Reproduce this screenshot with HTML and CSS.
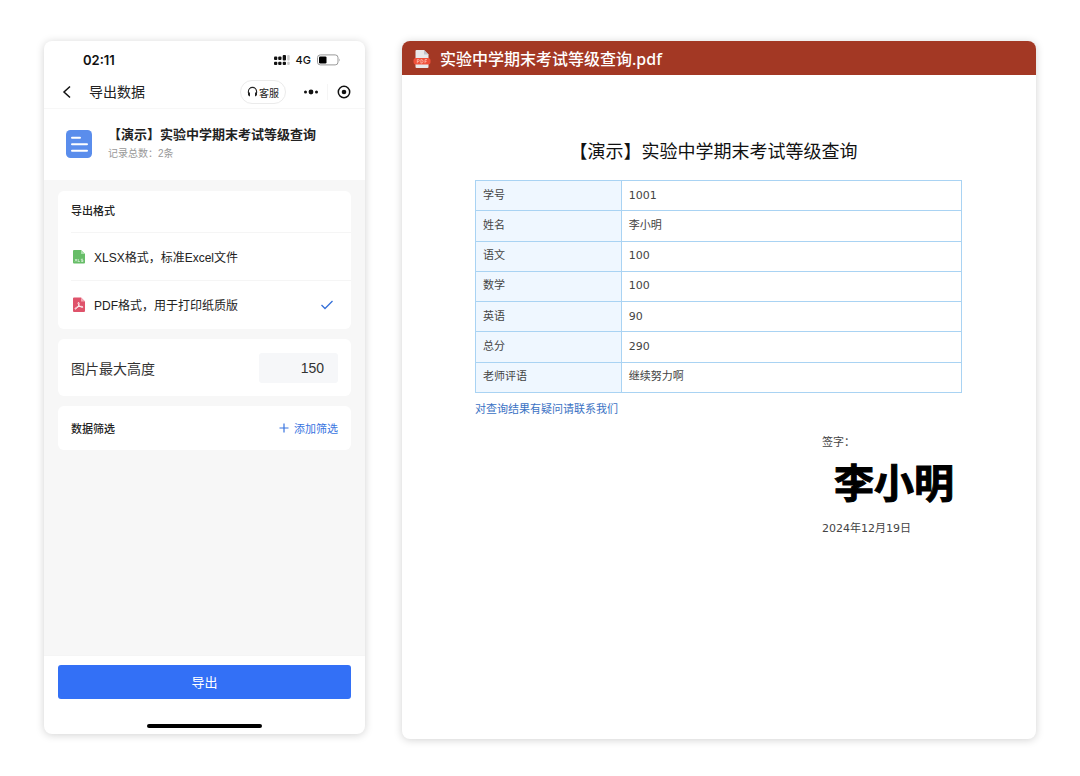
FILE: index.html
```html
<!DOCTYPE html>
<html lang="zh-CN">
<head>
<meta charset="utf-8">
<meta name="viewport" content="width=device-width, initial-scale=1">
<title>导出数据</title>
<link rel="stylesheet" href="styles.css">
</head>
<body>
<main class="page">
  <section class="phone">
    <div class="status">
      <span class="clock">02:11</span>
      <span class="status-right">
        <svg width="16" height="12" viewBox="0 0 16 12" aria-hidden="true">
          <g fill="#111"><rect x="0" y="2.500" width="3.300" height="3.500" rx="1"/><rect x="4.200" y="2.500" width="3.300" height="3.500" rx="1"/><rect x="8.700" y="1" width="3.300" height="5.500" rx="1"/><rect x="0" y="7.700" width="3.300" height="3.300" rx="1"/><rect x="4.200" y="7.700" width="3.300" height="3.300" rx="1"/><rect x="8.700" y="7.700" width="3.300" height="3.300" rx="1"/></g>
          <g fill="#ccc"><rect x="13.200" y="1" width="2.500" height="5.500" rx="1"/><rect x="13.200" y="7.700" width="2.500" height="3.300" rx="1"/></g>
        </svg>
        <span class="net">4G</span>
        <svg width="24" height="12" viewBox="0 0 24 12" aria-hidden="true">
          <rect x=".5" y=".9" width="20.500" height="10" rx="2.800" fill="#fff" stroke="#999"/>
          <rect x="2" y="2.400" width="7.500" height="7" rx="1.200" fill="#000"/>
          <path d="M22.300 4.500q1.500 1.400 0 3z" fill="#999"/>
        </svg>
      </span>
    </div>
    <header class="nav">
      <button class="icon-btn back" aria-label="返回"><svg width="10" height="14" viewBox="0 0 10 14"><path d="M8 1.500 2 7l6 5.500" fill="none" stroke="#111" stroke-width="1.500"/></svg></button>
      <h1 class="nav-title">导出数据</h1>
      <button class="service"><svg width="11" height="12" viewBox="0 0 11 12" aria-hidden="true"><path d="M1.400 7V5.500a4.100 4.100 0 0 1 8.200 0V7" fill="none" stroke="#222" stroke-width="1.100"/><path d="M1 6.500h2v3.700H2.200L1 9zM10 6.500H8v3.700h.8L10 9z" fill="#222"/></svg>客服</button>
      <div class="capsule">
        <button class="icon-btn" aria-label="更多"><svg width="16" height="16" viewBox="0 0 16 16"><g fill="#111"><circle cx="2.500" cy="8" r="1.500"/><circle cx="8" cy="8" r="2.400"/><circle cx="13.500" cy="8" r="1.500"/></g></svg></button>
        <button class="icon-btn close" aria-label="关闭"><svg width="14" height="14" viewBox="0 0 14 14"><circle cx="7" cy="7" r="5.700" fill="none" stroke="#111" stroke-width="1.500"/><circle cx="7" cy="7" r="2.300" fill="#111"/></svg></button>
      </div>
    </header>
    <div class="intro">
      <svg class="intro-icon" width="26" height="28" viewBox="0 0 26 28" aria-hidden="true"><rect width="26" height="28" rx="4.500" fill="#5a8dec"/><path d="M6 7.700h8M6 14.300h15M6 20.700h15" stroke="#fff" stroke-width="2" stroke-linecap="round"/></svg>
      <div>
        <h2 class="intro-title">【演示】实验中学期末考试等级查询</h2>
        <p class="intro-count">记录总数：2条</p>
      </div>
    </div>
    <div class="content">
      <fieldset class="card formats">
        <legend class="card-title">导出格式</legend>
        <label class="option">
          <svg width="14" height="16" viewBox="0 0 14 16" aria-hidden="true"><path d="M2 1h7l4 4v8.500a1 1 0 0 1-1 1H2a1 1 0 0 1-1-1V2a1 1 0 0 1 1-1z" fill="#67bd68"/><path d="M9 1v4h4z" fill="#a9dfaa"/><path d="m3 10 2 2.500m0-2.500-2 2.500M6.200 10v2.500h1.600M11 10.200H9.300v1.100H11v1.200H9.200" fill="none" stroke="#e8f7e8" stroke-width=".7"/></svg>
          <span>XLSX格式，标准Excel文件</span>
          <input class="radio" type="radio" name="format">
          <svg class="check" width="14" height="12" viewBox="0 0 14 12" aria-hidden="true"><path d="m1.500 6 3.500 3.500L12.500 2" fill="none" stroke="#3570d8" stroke-width="1.300"/></svg>
        </label>
        <label class="option">
          <svg width="14" height="16" viewBox="0 0 14 16" aria-hidden="true"><path d="M2 .5h7l4 4V14a1 1 0 0 1-1 1H2a1 1 0 0 1-1-1V1.500a1 1 0 0 1 1-1z" fill="#df536b"/><path d="M9 .5v4h4z" fill="#f3a6b3"/><path d="M6.500 5.500c1.300 0 .5 2.600-.4 4-.9 1.500-2.400 3-3.100 2.500-.6-.7 1.900-2.200 4-2.500 2-.3 4-.2 3.900.6-.3 1-3-.4-3.900-1.700C6 7 5.700 5.500 6.500 5.500z" fill="none" stroke="#fff" stroke-width=".9"/></svg>
          <span>PDF格式，用于打印纸质版</span>
          <input class="radio" type="radio" name="format" checked>
          <svg class="check" width="14" height="12" viewBox="0 0 14 12" aria-hidden="true"><path d="m1.500 6 3.500 3.500L12.500 2" fill="none" stroke="#3570d8" stroke-width="1.300"/></svg>
        </label>
      </fieldset>
      <div class="card height-card">
        <label for="max-height">图片最大高度</label>
        <input class="number" id="max-height" type="text" inputmode="numeric" value="150">
      </div>
      <div class="card filter-card">
        <h3 class="filter-title">数据筛选</h3>
        <button class="add"><svg width="10" height="10" viewBox="0 0 10 10" aria-hidden="true"><path d="M5 .5v9M.5 5h9" stroke="#3874df" stroke-width="1.200"/></svg>添加筛选</button>
      </div>
    </div>
    <footer class="footer">
      <button class="export">导出</button>
      <div class="home-bar"></div>
    </footer>
  </section>

  <article class="pdf">
    <header class="pdf-bar">
      <svg width="18" height="20" viewBox="0 0 18 20" aria-hidden="true"><path d="M3.500 1H11l4.500 4.500V18a1 1 0 0 1-1 1h-11a1 1 0 0 1-1-1V2a1 1 0 0 1 1-1z" fill="#e9e8ea"/><path d="M11 1v4.500h4.500z" fill="#bfc4cb"/><rect x=".5" y="9" width="17" height="6.500" rx="2.500" fill="#f0503a"/><path d="M4.300 14.200v-3.700h1q1 0 1 1t-1 1h-1M7.900 14.200v-3.700q2.200 0 2.200 1.850T7.900 14.200zM12 14.200v-3.700h2M12 12.300h1.700" fill="none" stroke="#ffc9bd" stroke-width=".7"/></svg>
      <span>实验中学期末考试等级查询.pdf</span>
    </header>
    <div class="sheet">
      <h2 class="sheet-title">【演示】实验中学期末考试等级查询</h2>
      <table class="grades">
        <tbody>
          <tr><th scope="row">学号</th><td>1001</td></tr>
          <tr><th scope="row">姓名</th><td>李小明</td></tr>
          <tr><th scope="row">语文</th><td>100</td></tr>
          <tr><th scope="row">数学</th><td>100</td></tr>
          <tr><th scope="row">英语</th><td>90</td></tr>
          <tr><th scope="row">总分</th><td>290</td></tr>
          <tr><th scope="row">老师评语</th><td>继续努力啊</td></tr>
        </tbody>
      </table>
      <a class="contact" href="#">对查询结果有疑问请联系我们</a>
      <div class="sign">
        <p>签字：</p>
        <p class="signature">李小明</p>
        <p>2024年12月19日</p>
      </div>
    </div>
    <span class="watermark">KNxnq</span>
  </article>
</main>
</body>
</html>
```

FILE: styles.css
```css
* { box-sizing: border-box; }
body {
  margin: 0;
  background: #fff;
  color: #222;
  font-family: "Liberation Sans", "Noto Sans CJK SC", sans-serif;
}
h1, h2, h3, p { margin: 0; }
button, input { font: inherit; color: inherit; }
button { border: 0; padding: 0; background: none; cursor: pointer; }
svg { display: block; flex: none; }

.page {
  display: flex;
  gap: 37px;
  min-height: 100vh;
  padding: 41px 44px 37px;
}
.phone, .pdf {
  display: flex;
  flex-direction: column;
  min-width: 0;
  background: #fff;
  border-radius: 8px;
  box-shadow: 0 1px 8px rgba(0, 0, 0, .18);
}
.phone { flex: 321; margin-bottom: 5px; }
.pdf { flex: 634; position: relative; }

/* phone header */
.status {
  display: flex;
  align-items: center;
  justify-content: space-between;
  height: 37px;
  padding: 0 24px 0 39px;
}
.clock { font: 600 13px/20px Inter, sans-serif; color: #111; }
.status-right { display: flex; align-items: center; gap: 6px; }
.net { font: 500 11px/16px Inter, sans-serif; color: #111; }
.nav {
  display: flex;
  align-items: center;
  height: 31px;
  padding: 0 14px 2px 18px;
  border-bottom: 1px solid #f7f7f7;
}
.icon-btn { display: flex; align-items: center; justify-content: center; }
.nav-title { margin: 0 auto 0 17px; font-size: 14px; font-weight: 400; line-height: 20px; }
.service {
  display: flex;
  align-items: center;
  justify-content: center;
  gap: 1px;
  width: 46px;
  height: 24px;
  border: 1px solid #ebebeb;
  border-radius: 12px;
  font-size: 10px;
}
.capsule { display: flex; align-items: center; gap: 8px; margin-left: 17px; }
.close { height: 16px; padding-left: 9px; border-left: 1px solid #f5f5f5; }

.intro { display: flex; align-items: center; gap: 16px; height: 71px; padding: 0 20px 2px 22px; }
.intro-title { font-size: 13px; font-weight: 600; line-height: 20px; white-space: nowrap; }
.intro-count { font-size: 10px; line-height: 18px; color: #999; }

/* export settings */
.content {
  flex: 1;
  display: flex;
  flex-direction: column;
  gap: 10px;
  padding: 11px 14px;
  background: #f7f7f7;
}
.card { margin: 0; border: 0; border-radius: 6px; background: #fff; }
.formats { min-width: 0; padding: 0 0 1px 13px; }
.card-title { float: left; width: 100%; padding: 0; font-size: 11px; font-weight: 500; line-height: 41px; }
.option {
  clear: both;
  display: flex;
  align-items: center;
  gap: 8px;
  height: 48px;
  padding: 0 17px 0 1px;
  border-top: 1px solid #f5f5f5;
  font-size: 12px;
}
.radio { appearance: none; width: 1px; height: 1px; margin: 0 0 0 auto; }
.check { visibility: hidden; }
.radio:checked + .check { visibility: visible; }
.height-card, .filter-card {
  display: flex;
  align-items: center;
  justify-content: space-between;
  padding: 0 13px;
}
.height-card { height: 57px; font-size: 14px; color: #333; }
.number {
  width: 79px;
  height: 30px;
  padding: 0 14px;
  border: 0;
  border-radius: 3px;
  background: #f6f7f9;
  font-size: 14px;
  text-align: right;
}
.filter-card { height: 44px; font-size: 11px; }
.filter-title { font-size: 11px; font-weight: 500; }
.add { display: flex; align-items: center; gap: 5px; color: #3874df; }
.footer { padding: 9px 14px 6px; border-top: 1px solid #f5f5f5; }
.export {
  display: block;
  width: 100%;
  height: 34px;
  padding-bottom: 2px;
  border-radius: 3px;
  background: #3370f6;
  color: #fff;
  font-size: 13px;
}
.home-bar { width: 115px; height: 4px; margin: 25px auto 0; border-radius: 2px; background: #000; }

/* document */
.pdf-bar {
  display: flex;
  align-items: center;
  gap: 9px;
  height: 34px;
  padding: 2px 11px 0;
  border-radius: 8px 8px 0 0;
  background: #a33824;
  color: #fff;
  font: 500 16px/24px "Noto Sans", "Noto Sans CJK SC", sans-serif;
}
.sheet {
  padding: 64px 74px 0 73px;
  color: #444;
  font: 11px/18px "DejaVu Sans", "Noto Sans CJK SC", sans-serif;
}
.sheet-title { padding-right: 10px; font-size: 18px; font-weight: 400; line-height: 26px; text-align: center; color: #111; }
.grades { width: 100%; height: 213px; margin-top: 15px; border-collapse: collapse; table-layout: fixed; }
.grades th, .grades td { padding: 0 7px; border: 1px solid #a9d3f3; font-weight: 400; text-align: left; }
.grades th { width: 30%; background: #eff7ff; }
.contact { display: block; margin-top: 8px; color: #3b72c4; text-decoration: none; }
.sign { width: 140px; margin: 15px 0 0 auto; }
.signature {
  padding-left: 12px;
  color: #000;
  font: 700 40px/58px "Noto Sans CJK SC", sans-serif;
  -webkit-text-stroke: 1px #000;
  stroke-linejoin: round;
  white-space: nowrap;
}
.signature + p { margin-top: 10px; }
.watermark {
  position: absolute;
  left: -20px;
  bottom: 36px;
  color: rgba(0, 0, 0, .01);
  font-size: 20px;
  line-height: 24px;
}
```
